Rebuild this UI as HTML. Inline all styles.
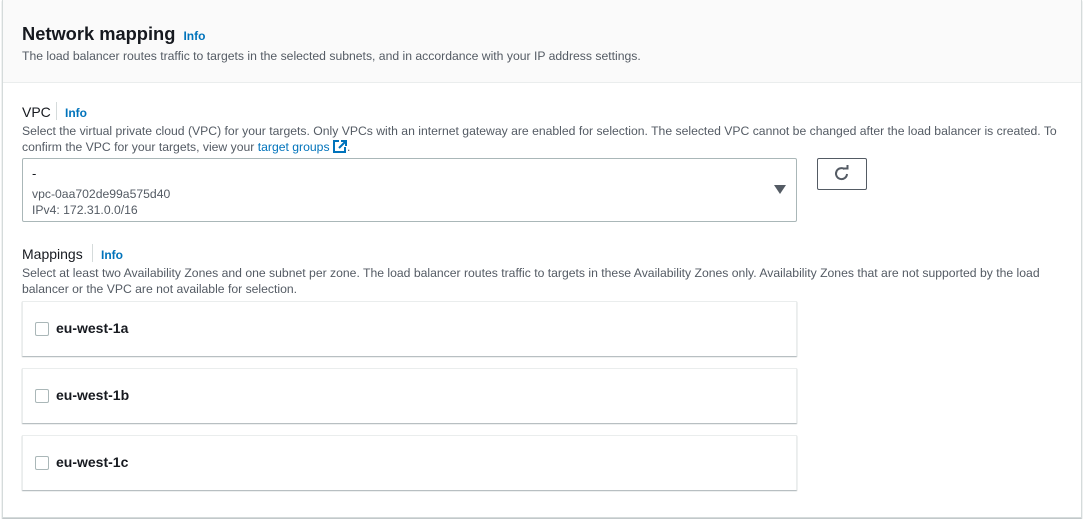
<!DOCTYPE html>
<html><head><style>
*{margin:0;padding:0;box-sizing:border-box}
body{width:1083px;height:519px;background:#fff;font-family:"Liberation Sans",sans-serif;color:#16191f;position:relative;overflow:hidden}
.panel{position:absolute;left:2px;top:0;width:1080px;height:518px;border:1px solid #d5dbdb;border-top:none;box-shadow:0 1px 1px rgba(0,28,36,.3)}
.hdr{position:absolute;left:0;top:0;width:100%;height:83px;background:#fafafa;border-bottom:1px solid #eaeded}
.a{position:absolute;white-space:nowrap}
.info{color:#0073bb;font-weight:bold;font-size:12px}
.desc{color:#545b64;font-size:12.2px}
.card{position:absolute;left:22px;width:775px;height:55px;border:1px solid #eaeded;border-bottom:none;box-shadow:0 1px 1px rgba(0,28,36,.35);background:#fff}
.cb{position:absolute;left:12px;top:20px;width:14px;height:14px;border:1px solid #aab7b8;border-radius:2px}
.cl{position:absolute;left:33px;top:18px;font-weight:bold;font-size:14px}
</style></head><body>
<div class="panel">
<div class="hdr"></div>
</div>
<div class="a" style="left:22px;top:23px;font-size:18.3px;font-weight:bold">Network mapping <span class="info" style="margin-left:3px">Info</span></div>
<div class="a desc" style="left:22px;top:49px">The load balancer routes traffic to targets in the selected subnets, and in accordance with your IP address settings.</div>

<div class="a" style="left:22px;top:104px;font-size:14px">VPC</div>
<div class="a" style="left:56px;top:102px;width:1px;height:18px;background:#d5dbdb"></div>
<div class="a info" style="left:65px;top:106px">Info</div>
<div class="a desc" style="left:22px;top:124px">Select the virtual private cloud (VPC) for your targets. Only VPCs with an internet gateway are enabled for selection. The selected VPC cannot be changed after the load balancer is created. To</div>
<div class="a desc" style="left:22px;top:140px">confirm the VPC for your targets, view your <span style="color:#0073bb">target groups</span> <svg width="14" height="13" viewBox="0 0 14 13" style="vertical-align:-2px"><path d="M6 1H1v11h11V7" fill="none" stroke="#0073bb" stroke-width="2"/><path d="M8 1h5v5M13 1L6 8" fill="none" stroke="#0073bb" stroke-width="2"/></svg>.</div>

<div class="a" style="left:22px;top:158px;width:775px;height:64px;border:1px solid #aab7b8;border-radius:2px"></div>
<div class="a" style="left:32px;top:166px;font-size:13px">-</div>
<div class="a desc" style="left:32px;top:187px">vpc-0aa702de99a575d40</div>
<div class="a desc" style="left:32px;top:203px">IPv4: 172.31.0.0/16</div>
<svg class="a" style="left:774px;top:185px" width="12" height="9"><path d="M0 0h12L6 9z" fill="#545b64"/></svg>

<div class="a" style="left:817px;top:158px;width:50px;height:32px;border:1px solid #545b64;border-radius:2px"></div>
<svg class="a" style="left:833px;top:165px" width="18" height="18" viewBox="0 0 18 18"><path d="M14 9A5.5 5.5 0 1 1 11.5 4" fill="none" stroke="#545b64" stroke-width="2"/><path d="M10 3.5h4.5V-1" fill="none" stroke="#545b64" stroke-width="2"/></svg>

<div class="a" style="left:22px;top:246px;font-size:14px">Mappings</div>
<div class="a" style="left:92px;top:244px;width:1px;height:18px;background:#d5dbdb"></div>
<div class="a info" style="left:101px;top:248px">Info</div>
<div class="a desc" style="left:22px;top:266px">Select at least two Availability Zones and one subnet per zone. The load balancer routes traffic to targets in these Availability Zones only. Availability Zones that are not supported by the load</div>
<div class="a desc" style="left:22px;top:282px">balancer or the VPC are not available for selection.</div>

<div class="card" style="top:301px"><div class="cb"></div><div class="cl">eu-west-1a</div></div>
<div class="card" style="top:368px"><div class="cb"></div><div class="cl">eu-west-1b</div></div>
<div class="card" style="top:435px"><div class="cb"></div><div class="cl">eu-west-1c</div></div>
</body></html>
